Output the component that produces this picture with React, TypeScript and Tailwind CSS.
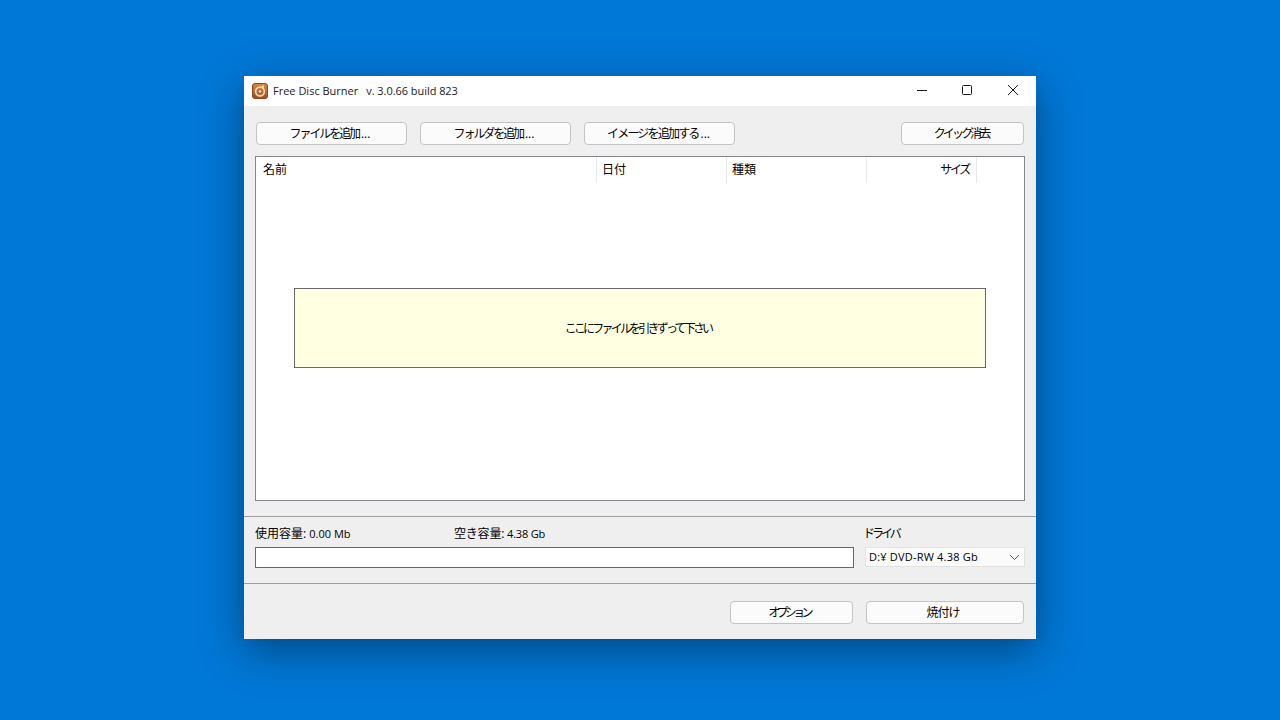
const ui = "font-['Open_Sans','Noto_Sans_CJK_JP',sans-serif]";

function ActionButton({ label, dots, className }: { label: string; dots?: boolean; className: string }) {
  return (
    <button
      className={`h-[23px] rounded-[4px] border border-[#c4c4c4] bg-[#fbfbfb] text-[12px] leading-[21px] text-black ${className}`}
    >
      {label}
      {dots && <span className="ml-[2px] tracking-normal">...</span>}
    </button>
  );
}

function AppIcon() {
  return (
    <svg width="16" height="16" viewBox="0 0 16 16" className="shrink-0">
      <defs>
        <linearGradient id="iconBg" x1="0" y1="0" x2="0" y2="1">
          <stop offset="0" stopColor="#e0843c" />
          <stop offset="1" stopColor="#a4481c" />
        </linearGradient>
      </defs>
      <rect x="0.5" y="0.5" width="15" height="15" rx="2.5" fill="url(#iconBg)" stroke="#8a4a25" />
      <circle cx="8" cy="8.5" r="4.4" fill="none" stroke="#fbe3c8" strokeWidth="1.6" />
      <circle cx="8" cy="8.5" r="1.3" fill="#fbe3c8" />
      <rect x="10" y="2.5" width="2" height="2" fill="#fbe3c8" />
    </svg>
  );
}

const columns = [
  { label: "名前", className: "w-[341px] pl-[7px]" },
  { label: "日付", className: "w-[130px] pl-[5px]" },
  { label: "種類", className: "w-[140px] pl-[5px]" },
  { label: "サイズ", className: "w-[110px] pr-[7px] text-right tracking-[-2.3px]" },
];

export default function App() {
  return (
    <div className={`flex h-[720px] w-[1280px] items-start justify-center bg-[#0078d7] pt-[76px] ${ui}`}>
      <div className="flex h-[563px] w-[792px] flex-col bg-[#efefef] shadow-[0_12px_40px_rgba(0,0,0,0.4)]">
        {/* title bar */}
        <div className="flex h-[30px] shrink-0 items-center bg-white pl-[8px]">
          <AppIcon />
          <span className="ml-[5px] text-[11px] text-[#1a1a1a]">Free Disc Burner</span>
          <span className="ml-[8px] text-[11px] tracking-[-0.05px] text-[#1a1a1a]">v. 3.0.66 build 823</span>
          <div className="ml-auto flex h-full pb-[2px]">
            <div className="flex w-[46px] items-center justify-center">
              <svg width="10" height="10" viewBox="0 0 10 10">
                <path d="M0 5.5H10" stroke="#1a1a1a" fill="none" />
              </svg>
            </div>
            <div className="flex w-[44px] items-center justify-center">
              <svg width="10" height="10" viewBox="0 0 10 10">
                <rect x="0.5" y="0.5" width="9" height="9" rx="1" stroke="#1a1a1a" fill="none" />
              </svg>
            </div>
            <div className="flex w-[47px] items-center justify-center">
              <svg width="10" height="10" viewBox="0 0 10 10">
                <path d="M0 0L10 10M10 0L0 10" stroke="#1a1a1a" fill="none" />
              </svg>
            </div>
          </div>
        </div>

        {/* toolbar */}
        <div className="mt-[16px] flex pl-[12px] pr-[12px]">
          <ActionButton label="ファイルを追加" dots className="w-[151px] pr-[3px] tracking-[-2.1px]" />
          <ActionButton label="フォルダを追加" dots className="ml-[13px] w-[151px] pr-[3px] tracking-[-2.1px]" />
          <ActionButton label="イメージを追加する" dots className="ml-[13px] w-[151px] pr-[2px] tracking-[-1.8px]" />
          <ActionButton label="クイック消去" className="ml-auto w-[123px] pr-[3px] tracking-[-2.9px]" />
        </div>

        {/* file list */}
        <div className="mx-[11px] mt-[11px] h-[345px] border border-[#82878f] bg-white">
          <div className="flex h-[26px] text-[12px] leading-[25px] text-black">
            {columns.map((col) => (
              <div key={col.label} className={`border-r border-[#e8e8e8] ${col.className}`}>
                {col.label}
              </div>
            ))}
          </div>
          <div className="mx-[38px] mt-[105px] flex h-[80px] items-center justify-center border border-[#696969] bg-[#ffffe1] pr-[4px] pt-[2px] text-[12px] tracking-[-2.8px] text-black">
            ここにファイルを引きずって下さい
          </div>
        </div>

        {/* capacity and drive */}
        <div className="mt-[15px] flex h-[68px] shrink-0 flex-col border-y border-[#a0a0a0] px-[11px]">
          <div className="flex h-[30px] items-center pt-[4px] text-[12px] text-black">
            <span className="w-[199px]">
              使用容量: <span className="text-[11px]">0.00 Mb</span>
            </span>
            <span className="w-[409px] tracking-[-0.2px]">
              空き容量: <span className="text-[11px]">4.38 Gb</span>
            </span>
            <span className="tracking-[-3px]">ドライバ</span>
          </div>
          <div className="flex items-start justify-between">
            <div className="h-[21px] w-[599px] border border-[#696969] bg-white" />
            <div className="flex h-[20px] w-[160px] items-center justify-between border border-[#e2e2e2] bg-[#fbfbfb] pl-[3px] pr-[4px] text-[11px] tracking-[0.2px] text-black">
              <span>D:¥ DVD-RW 4.38 Gb</span>
              <svg width="11" height="7" viewBox="0 0 11 7">
                <path d="M1 1L5.5 5.5L10 1" stroke="#555555" fill="none" />
              </svg>
            </div>
          </div>
        </div>

        {/* burn actions */}
        <div className="mt-[17px] flex justify-end pr-[12px]">
          <ActionButton label="オプション" className="w-[123px] pr-[5px] tracking-[-3.7px]" />
          <ActionButton label="焼付け" className="ml-[13px] w-[158px] pr-[4px] tracking-[-1px]" />
        </div>
      </div>
    </div>
  );
}
